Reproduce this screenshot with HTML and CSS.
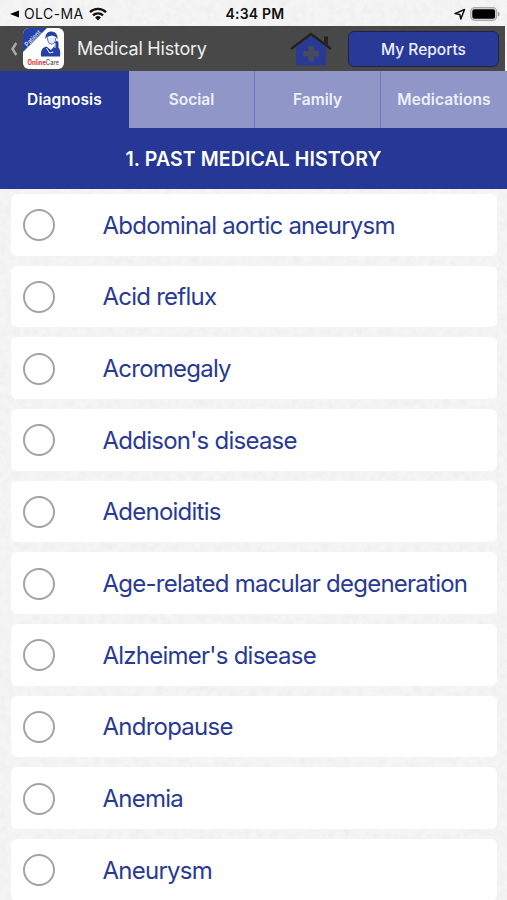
FILE: index.html
```html
<!DOCTYPE html>
<html lang="en">
<head>
<meta charset="utf-8">
<title>Medical History</title>
<link rel="stylesheet" href="styles.css">
</head>
<body>
<svg class="paper" width="507" height="900"><filter id="grain" x="0" y="0" width="100%" height="100%"><feTurbulence type="fractalNoise" baseFrequency=".14" numOctaves="3" seed="4"/><feColorMatrix values="0 0 0 0 .5  0 0 0 0 .5  0 0 0 0 .5  .22 0 0 0 -.08"/></filter><rect width="507" height="900" filter="url(#grain)"/></svg>
<div class="status">
  <div class="carrier">
    <svg class="back-app" viewBox="0 0 10 8"><path d="M0 4 10 0v8z"/></svg>
    <span class="carrier-name">OLC-MA</span>
    <svg class="wifi" viewBox="0 0 18 14"><g fill="none" stroke="#111" stroke-width="2.3"><path d="M1 5.1a11.3 11.3 0 0 1 16 0"/><path d="M4 8.4a7 7 0 0 1 10 0"/></g><path d="M9 13.5 6.1 10.5a4.2 4.2 0 0 1 5.8 0z" fill="#111"/></svg>
  </div>
  <span class="time">4:34 PM</span>
  <div class="indicators">
    <svg class="location" viewBox="0 0 12 12"><path d="M1 5.6 10.500 1.500 6.800 11 5.800 6.400z" fill="none" stroke="#111" stroke-width="1.500" stroke-linejoin="round"/></svg>
    <svg class="battery" viewBox="0 0 30 14"><rect x=".7" y=".7" width="26" height="12.6" rx="4" fill="#ddd" stroke="#aaa" stroke-width="1.2"/><rect x="2.3" y="2.3" width="22.8" height="9.4" rx="2.2"/><path d="M28 4.7c2 .7 2 3.900 0 4.600z" fill="#999"/></svg>
  </div>
</div>
<header class="navbar">
  <svg class="chevron" viewBox="0 0 8 14"><path d="M6.300 1 2.500 7l3.800 6" fill="none" stroke="#aaa" stroke-width="2.400"/></svg>
  <svg class="logo" viewBox="0 0 41 41">
    <defs><clipPath id="tile"><rect width="41" height="41" rx="6"/></clipPath></defs>
    <g clip-path="url(#tile)">
      <rect width="41" height="41" fill="#fff"/>
      <path d="M0 0h24L0 24z" fill="#2541a5"/>
      <path d="M22.500 11c-.5-5 2-7.500 6-7.500s6.500 3 6 8l-1.500-2.500-4-1.500-5 1.500z" fill="#2541a5"/>
      <path d="M24.500 9.500c0 4 1.500 6.500 4 6.500s4.200-2.500 4.200-6" fill="#e9edfa" stroke="#2541a5" stroke-width=".8"/>
      <path d="M18 28.500c-.5-6 1-9 5.500-10l4.500 3.500 3.500-4 .5-4 2-1.500 1.500 2v5c2 2 2 5 1.500 9z" fill="#2541a5"/>
      <path d="m23.500 20 3 5 4-1M32 15v5" fill="none" stroke="#fff" stroke-width=".9"/>
    </g>
    <text class="logo-patient" transform="translate(4.200 19) rotate(-45)" textLength="20" lengthAdjust="spacingAndGlyphs">Patient</text>
    <text class="logo-name" x="4.500" y="37" textLength="31.500" lengthAdjust="spacingAndGlyphs"><tspan class="red">Online</tspan>Care</text>
  </svg>
  <h1 class="title">Medical History</h1>
  <svg class="home" viewBox="0 0 42 34"><path d="M6 15 21 4l15 11v18.500H6z" fill="#283a96"/><path d="M1 17 21 2l20 15" fill="none" stroke="#222" stroke-width="2.600"/><path d="M34 4.500h4v8.500l-4-3z" fill="#222"/><path d="M18.500 14h5.500v5h5v5.500h-5v5h-5.500v-5h-5V19h5z" fill="#484b60"/></svg>
  <button class="reports">My Reports</button>
</header>
<nav class="tabs">
  <a class="tab active">Diagnosis</a><a class="tab">Social</a><a class="tab">Family</a><a class="tab">Medications</a>
</nav>
<h2 class="section">1. PAST MEDICAL HISTORY</h2>
<ul class="list">
  <li class="row"><i class="radio"></i><span>Abdominal aortic aneurysm</span></li>
  <li class="row"><i class="radio"></i><span>Acid reflux</span></li>
  <li class="row"><i class="radio"></i><span>Acromegaly</span></li>
  <li class="row"><i class="radio"></i><span>Addison's disease</span></li>
  <li class="row"><i class="radio"></i><span>Adenoiditis</span></li>
  <li class="row"><i class="radio"></i><span>Age-related macular degeneration</span></li>
  <li class="row"><i class="radio"></i><span>Alzheimer's disease</span></li>
  <li class="row"><i class="radio"></i><span>Andropause</span></li>
  <li class="row"><i class="radio"></i><span>Anemia</span></li>
  <li class="row"><i class="radio"></i><span>Aneurysm</span></li>
</ul>
</body>
</html>
```

FILE: styles.css
```css
* { box-sizing: border-box; }
body { margin: 0; width: 507px; height: 900px; overflow: hidden; background: #f5f5f5; font-family: Inter, "Liberation Sans", sans-serif; }
.paper { position: absolute; top: 0; left: 0; z-index: -1; }
.status { height: 26px; display: grid; grid-template-columns: 1fr auto 1fr; align-items: center; padding: 1px 7px 0 10px; color: #111; font-size: 14px; }
.carrier, .indicators { display: flex; align-items: center; }
.carrier-name { margin-left: 5px; letter-spacing: .4px; }
.back-app { width: 9px; height: 8px; }
.wifi { width: 18px; height: 14px; margin-left: 5px; }
.time { font-weight: 600; letter-spacing: .2px; }
.indicators { justify-content: flex-end; gap: 4px; }
.location { width: 12px; height: 12px; }
.battery { width: 30px; height: 14px; }
.navbar { height: 45px; margin-right: 2px; background: #484848; display: flex; align-items: center; padding: 0 6px 0 10px; }
.chevron { width: 8px; height: 14px; }
.logo { width: 41px; height: 41px; margin-left: 5px; }
.logo-patient { font-size: 6.5px; font-weight: 500; fill: #e4e9ff; }
.logo-name { font-size: 7px; font-weight: 500; fill: #555; }
.red { fill: #e02d3c; font-weight: 700; }
.title { margin: 0 0 0 13px; font-size: 18px; font-weight: 400; letter-spacing: -.22px; color: #eee; width: 136px; white-space: nowrap; }
.home { width: 42px; height: 34px; margin-left: 77px; }
.reports { width: 151px; height: 36px; margin-left: auto; padding: 1px 0 0; border: 1px solid #1b2350; border-radius: 6px; background: #283a96; color: #eef; font: 500 15.500px Inter, sans-serif; }
.tabs { height: 57px; display: grid; grid-template-columns: 129px 126px 126px 126px; background: #263795; }
.tab { display: flex; align-items: center; justify-content: center; color: #edf0ff; background: #9096c7; font-size: 15.500px; font-weight: 600; border-right: 1px solid #7079b9; }
.tab.active { background: #263795; border: 0; color: #fff; letter-spacing: .1px; }
.tab:last-child { border: 0; letter-spacing: .1px; }
.section { margin: 0; height: 61px; display: flex; align-items: center; justify-content: center; background: #263795; color: #fff; font-size: 19.500px; font-weight: 600; letter-spacing: .1px; }
.list { list-style: none; margin: 0; padding: 5px 10px 0 11px; display: grid; grid-auto-rows: 61.670px; row-gap: 10px; }
.row { display: flex; align-items: center; padding: 1px 0 0 12px; background: #fff; border-radius: 6px; color: #283a94; font-size: 24px; letter-spacing: -.76px; white-space: nowrap; }
.radio { width: 32px; height: 32px; border: 2px solid #a3a3a3; border-radius: 50%; margin-right: 47.500px; }
```
